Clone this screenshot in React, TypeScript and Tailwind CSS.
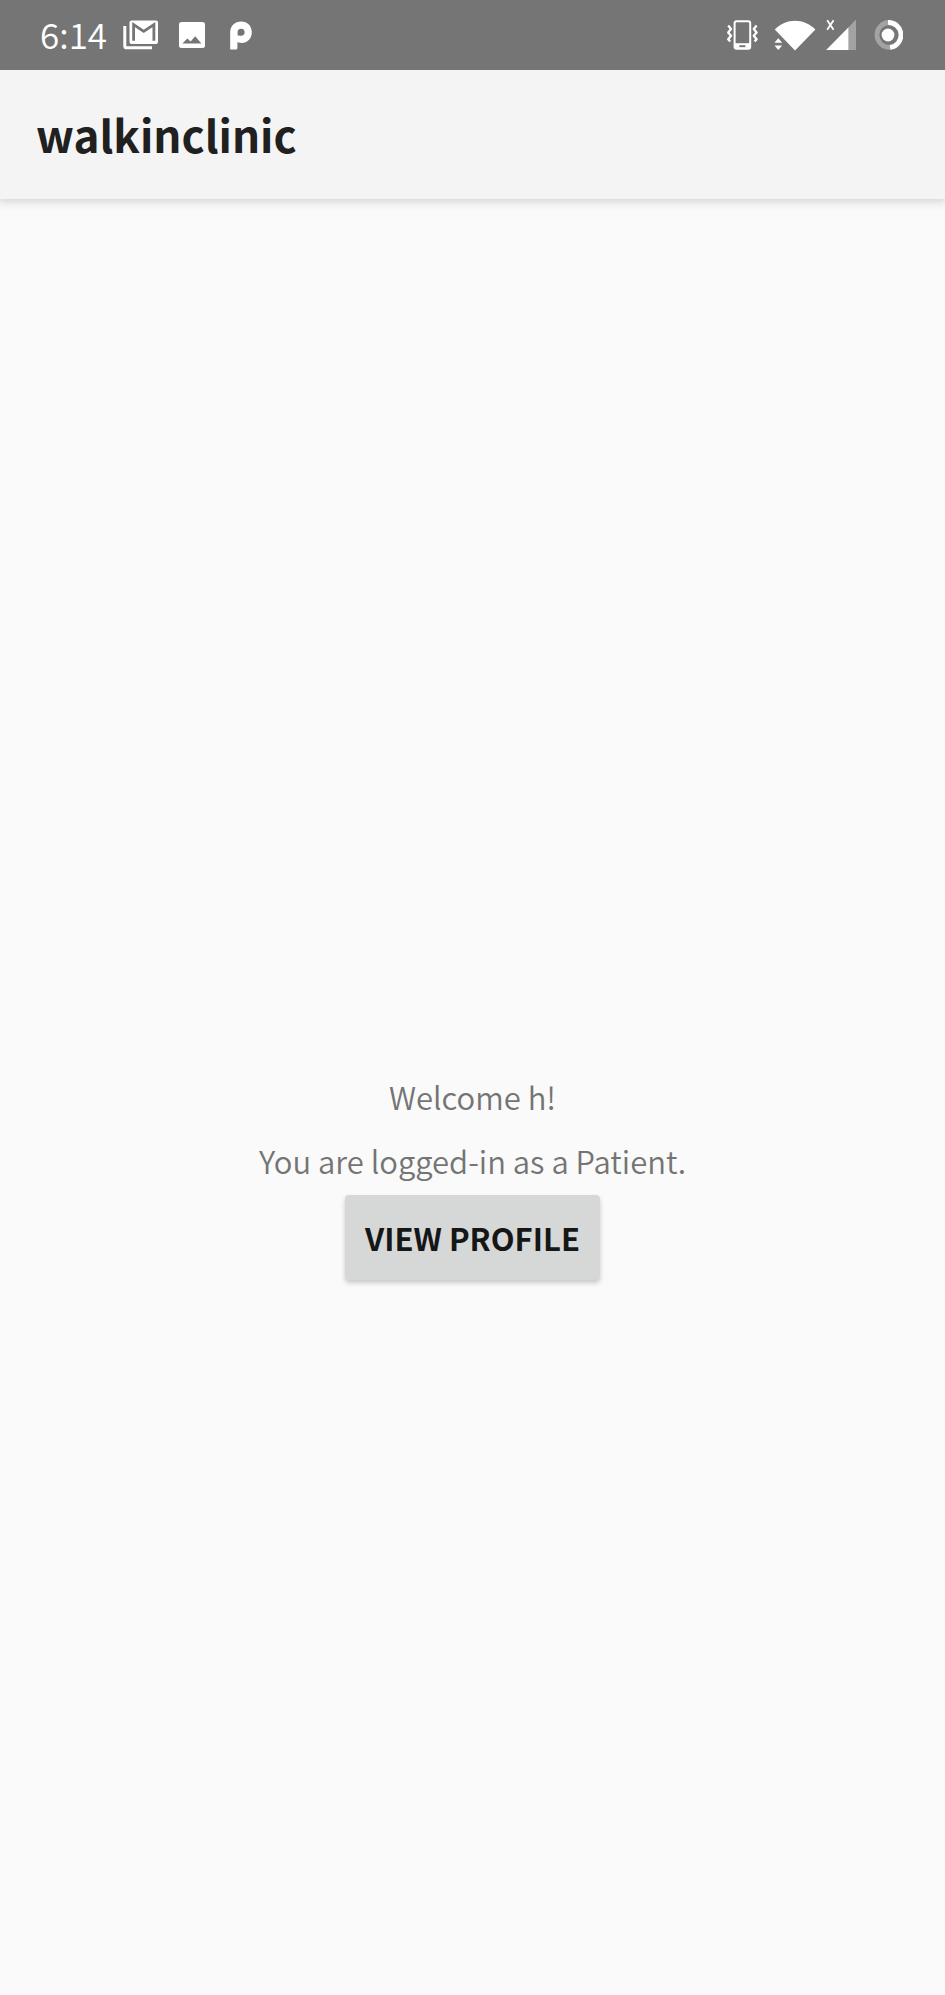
function MailStackIcon() {
  return (
    <svg className="h-[30px] w-[36px]" viewBox="0 0 36 30" fill="none" aria-hidden="true">
      <path d="M1.8 6v20.2c0 .8.6 1.6 1.6 1.6H29" stroke="#fff" strokeWidth="3" />
      <rect x="6.5" y="0.5" width="28.5" height="23.5" rx="2" fill="#fff" />
      <path d="M10.6 20.8V4.6L20.7 11.4 30.9 4.6V20.8" stroke="#757575" strokeWidth="2.8" />
    </svg>
  );
}

function ImageIcon() {
  return (
    <svg className="h-[26px] w-[26px]" viewBox="0 0 26 26" aria-hidden="true">
      <rect width="26" height="26" rx="2.5" fill="#fff" />
      <path d="M3.4 21.6 8.4 16.4 11.6 19.4 16.2 14.2 22.4 21.6Z" fill="#757575" />
    </svg>
  );
}

function PushIcon() {
  return (
    <svg className="h-[29px] w-[24px]" viewBox="0 0 24 29" aria-hidden="true">
      <path
        d="M1.2 28.6V11.5C1.2 5 6 .6 12.2.6S22.8 5.2 22.8 11.2c0 6.4-4.6 10.8-10.2 10.8-1.8 0-3-.3-4.2-.9v5.6c0 1.2-.7 1.9-1.9 1.9Z"
        fill="#fff"
      />
      <path d="M8.6 14.6v-3.4a3.5 3.5 0 1 1 3.6 3.5c-1.3 0-2.3-.6-3.6-.1Z" fill="#757575" />
    </svg>
  );
}

function VibrateIcon() {
  return (
    <svg className="h-[30px] w-[31px]" viewBox="0 0 31 30" fill="none" stroke="#fff" aria-hidden="true">
      <rect x="7.6" y="1.2" width="15.6" height="27.6" rx="2" strokeWidth="2" />
      <path d="M8 24.2h15" strokeWidth="2" />
      <path d="M8 28h15" strokeWidth="1.6" />
      <path d="M8 26.2h4.4M18.4 26.2H23" strokeWidth="2.6" />
      <path
        d="M1.2 5.6 4 9 1.2 12.4 4 15.8 1.2 19.2 3.2 21.6M29.6 5.6 26.8 9 29.6 12.4 26.8 15.8 29.6 19.2 27.6 21.600"
        strokeWidth="2.3"
        strokeLinejoin="round"
      />
    </svg>
  );
}

function WifiIcon() {
  return (
    <svg className="h-[31px] w-[42px]" viewBox="0 0 42 31" fill="#fff" aria-hidden="true">
      <path d="M.8 9.6C6.4 3.6 13.5.8 21 .8s14.6 2.8 20.4 8.8L21 30.6Z" />
      <path d="M.4 22.8 4.3 18.2 8.2 22.8ZM.4 25.6H8.2L4.3 30Z" />
    </svg>
  );
}

function SignalIcon() {
  return (
    <svg className="h-[32px] w-[31px]" viewBox="0 0 31 32" aria-hidden="true">
      <path d="M30 .6V31H.4Z" fill="#a3a3a3" />
      <path d="M22.4 8.4V31H.2Z" fill="#fff" />
      <path d="M1.2 1.2 7.6 10.8M7.6 1.2 1.2 10.8" stroke="#fff" strokeWidth="1.8" />
    </svg>
  );
}

function BatteryIcon() {
  return (
    <svg className="h-[30px] w-[30px]" viewBox="0 0 30 30" fill="none" aria-hidden="true">
      <path d="M15 2.5A12.5 12.5 0 0 0 17 27.4" stroke="#a3a3a3" strokeWidth="4.8" />
      <path d="M15 2.5A12.5 12.5 0 0 1 17 27.4" stroke="#fff" strokeWidth="4.8" />
      <circle cx="15" cy="15" r="6.4" fill="#fff" />
    </svg>
  );
}

export default function App() {
  return (
    <div className="flex min-h-screen flex-col overflow-x-hidden bg-[#fafafa] font-['Noto_Sans_CJK_SC','Noto_Sans',sans-serif]">
      <div className="relative z-10 flex h-[70px] items-center justify-between bg-[#757575] pr-[42px] pl-10 text-white">
        <div className="flex items-center">
          <span className="pb-0.5 text-[35px] leading-10 font-[350]">6:14</span>
          <div className="ml-4 flex items-center gap-5">
            <MailStackIcon />
            <div className="flex items-center gap-6">
              <ImageIcon />
              <PushIcon />
            </div>
          </div>
        </div>
        <div className="flex items-center gap-4">
          <VibrateIcon />
          <div className="flex items-center gap-2.5">
            <WifiIcon />
            <SignalIcon />
          </div>
          <BatteryIcon />
        </div>
      </div>

      <header className="flex h-[129px] items-center bg-[#f4f4f4] px-9 pb-0.5 shadow-[0_0_10px_2px_rgba(0,0,0,0.18)]">
        <h1 className="text-[44px] leading-[64px] font-bold text-[#202020]">walkinclinic</h1>
      </header>

      <main className="grid flex-1 grid-rows-[1fr_auto_1fr] justify-items-center text-[31px] leading-[44px]">
        <p className="row-start-2 font-[350] text-[#747474]">Welcome h!</p>
        <div className="row-start-3 flex flex-col items-center pt-5">
          <p className="font-[350] text-[#747474]">You are logged-in as a Patient.</p>
          <button
            type="button"
            className="mt-3 h-[85px] rounded-[4px] bg-[#d6d8d7] px-5 font-bold text-[#151716] shadow-[0_3px_5px_rgba(0,0,0,0.2)]"
          >
            VIEW PROFILE
          </button>
        </div>
      </main>
    </div>
  );
}
